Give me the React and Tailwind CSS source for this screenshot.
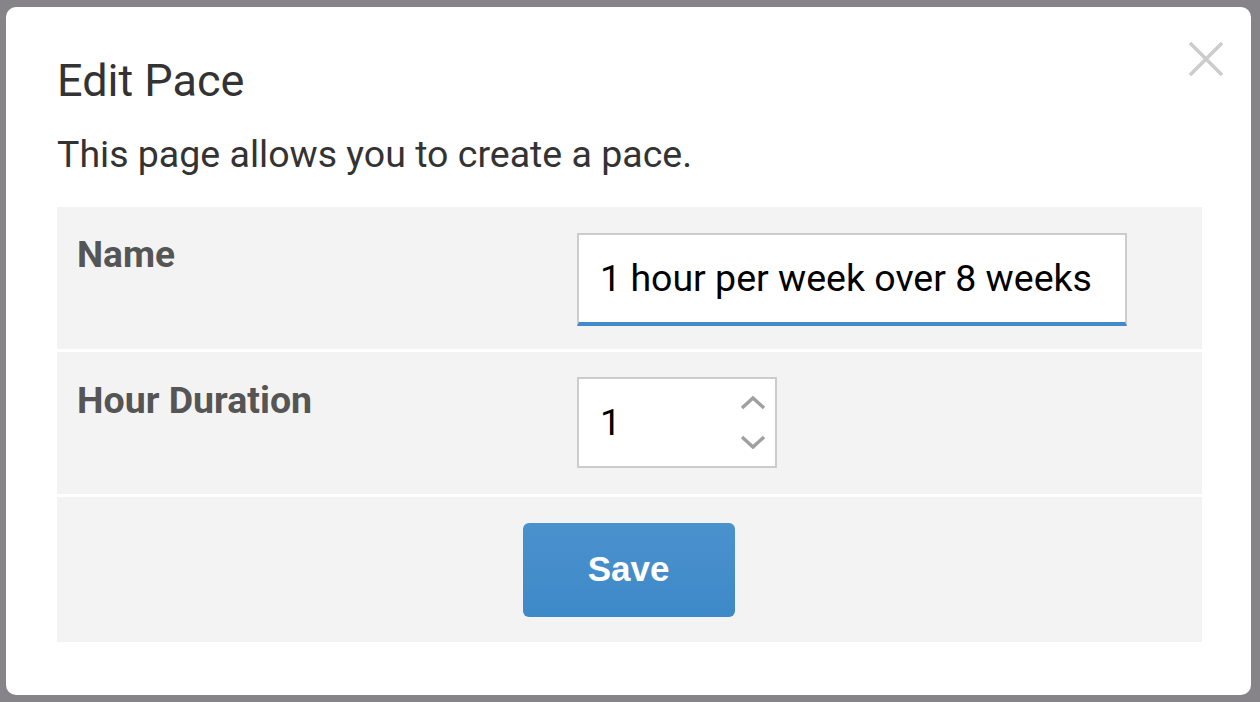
import React from "react";

const roboto = { fontFamily: "Roboto, 'Noto Sans', sans-serif" };

function CloseIcon() {
	return (
		<svg width="36" height="36" viewBox="0 0 36 36" fill="none">
			<path d="M2 2 L34 34 M34 2 L2 34" stroke="#cccccc" strokeWidth="3.5" />
		</svg>
	);
}

function Spinner() {
	return (
		<div className="flex flex-col items-center gap-[25px] pr-[9px]">
			<svg width="26" height="14" viewBox="0 0 26 14" fill="none">
				<path d="M2 12 L13 2 L24 12" stroke="#a0a0a0" strokeWidth="3.5" />
			</svg>
			<svg width="26" height="14" viewBox="0 0 26 14" fill="none">
				<path d="M2 2 L13 12 L24 2" stroke="#a0a0a0" strokeWidth="3.5" />
			</svg>
		</div>
	);
}

export default function App() {
	return (
		<div
			className="h-[702px] w-full bg-[#868488] pt-[7px] pl-[6px] pr-[9px] pb-[7px]"
			style={roboto}
		>
			<div className="relative h-full bg-white rounded-[10px] pl-[51px] pr-[49px] pt-[50px]">
				{/* close */}
				<button className="absolute top-[34px] right-[27px]">
					<CloseIcon />
				</button>

				<h1 className="text-[45px] leading-[48px] text-[#333333] font-normal">
					Edit Pace
				</h1>
				<p className="mt-[27px] text-[37.5px] leading-[44px] text-[#333333]">
					This page allows you to create a pace.
				</p>

				<div className="mt-[31px] flex flex-col gap-[3px]">
					{/* Name row */}
					<div className="flex items-start bg-[#f3f3f3] h-[142px] pt-[26px] pl-[20px]">
						<div className="w-[500px] text-[37px] leading-[44px] font-bold text-[#555555]">
							Name
						</div>
						<div className="w-[550px] h-[93px] bg-white border-2 border-b-4 border-[#cccccc] border-b-[#428bca] flex items-center pl-[21px]">
							<input
								readOnly
								value="1 hour per week over 8 weeks"
								className="w-full bg-transparent outline-none text-[37.5px] text-black"
								style={roboto}
							/>
						</div>
					</div>

					{/* Hour Duration row */}
					<div className="flex items-start bg-[#f3f3f3] h-[142px] pt-[25px] pl-[20px]">
						<div className="w-[500px] mt-[1px] text-[37.5px] leading-[44px] font-bold text-[#555555]">
							Hour Duration
						</div>
						<div className="w-[200px] h-[91px] bg-white border-2 border-[#cccccc] flex items-center pl-[21px]">
							<input
								readOnly
								value="1"
								className="w-full min-w-0 bg-transparent outline-none text-[37.5px] text-black"
								style={roboto}
							/>
							<Spinner />
						</div>
					</div>

					{/* Save row */}
					<div className="flex justify-center items-center bg-[#f3f3f3] h-[145px]">
						<button
							className="w-[212px] h-[94px] -ml-[2px] rounded-[6px] bg-gradient-to-b from-[#4a92ce] to-[#3e89c8] text-white text-[35px] font-bold"
							style={{ fontFamily: "'Liberation Sans', Arial, sans-serif" }}
						>
							Save
						</button>
					</div>
				</div>
			</div>
		</div>
	);
}
